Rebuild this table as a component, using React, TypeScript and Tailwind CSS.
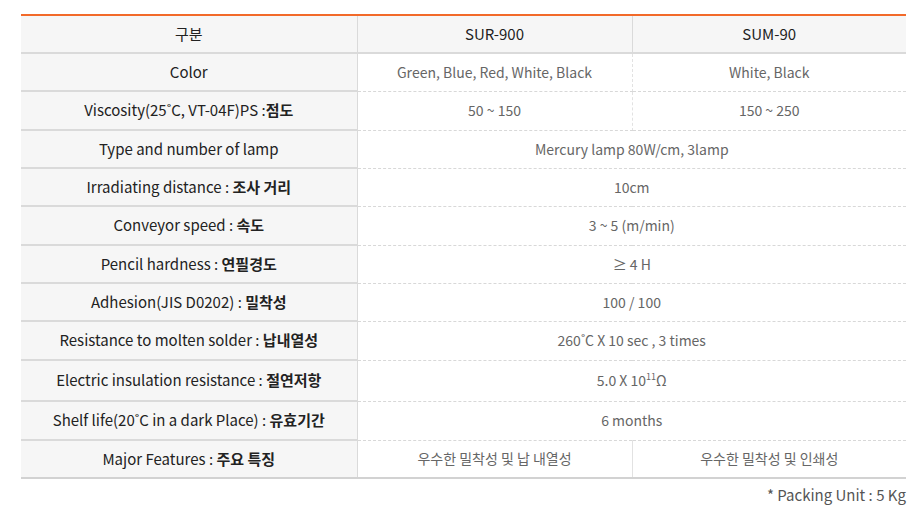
const rows: { label: string; ko?: string; a: React.ReactNode; b?: React.ReactNode; h: string }[] = [
  { label: 'Color', a: 'Green, Blue, Red, White, Black', b: 'White, Black', h: 'h-[38px]' },
  { label: 'Viscosity(25˚C, VT-04F)PS :', ko: '점도', a: '50 ~ 150', b: '150 ~ 250', h: 'h-[39px]' },
  { label: 'Type and number of lamp', a: 'Mercury lamp 80W/cm, 3lamp', h: 'h-[38px]' },
  { label: 'Irradiating distance : ', ko: '조사 거리', a: '10cm', h: 'h-[38px]' },
  { label: 'Conveyor speed : ', ko: '속도', a: '3 ~ 5 (m/min)', h: 'h-[39px]' },
  { label: 'Pencil hardness : ', ko: '연필경도', a: '≥ 4 H', h: 'h-[38px]' },
  { label: 'Adhesion(JIS D0202) : ', ko: '밀착성', a: '100 / 100', h: 'h-[38px]' },
  { label: 'Resistance to molten solder : ', ko: '납내열성', a: '260˚C X 10 sec , 3 times', h: 'h-[39px]' },
  {
    label: 'Electric insulation resistance : ',
    ko: '절연저항',
    a: (
      <span>
        5.0 X 10<sup className="text-[9px] relative top-[-6px] align-baseline">11</sup>Ω
      </span>
    ),
    h: 'h-[41px]',
  },
  { label: 'Shelf life(20˚C in a dark Place) : ', ko: '유효기간', a: '6 months', h: 'h-[39px]' },
  { label: 'Major Features : ', ko: '주요 특징', a: '우수한 밀착성 및 납 내열성', b: '우수한 밀착성 및 인쇄성', h: 'h-[38px]' },
]

export default function App() {
  return (
    <div
      className="w-[920px] h-[511px] bg-white pt-[14px] pl-[21px] pr-[14px]"
      style={{ fontFamily: '"Noto Sans CJK KR", "Noto Sans", sans-serif' }}
    >
      <table className="w-[885px] border-collapse table-fixed border-t-2 border-t-[#f26a2a] border-b-2 border-b-[#d2d2d2] text-[14px]">
        <colgroup>
          <col className="w-[336px]" />
          <col className="w-[275px]" />
          <col className="w-[274px]" />
        </colgroup>
        <thead>
          <tr className="h-[38px] bg-[#f6f6f6] border-b-2 border-b-[#dadada]">
            <th className="font-normal text-[15px] text-[#222] border-r border-r-[#dadada]">구분</th>
            <th className="font-normal text-[15px] text-[#222] border-r border-r-[#dadada]">SUR-900</th>
            <th className="font-normal text-[15px] text-[#222]">SUM-90</th>
          </tr>
        </thead>
        <tbody>
          {rows.map((r, i) => {
            const last = i === rows.length - 1
            return (
              <tr key={i} className={r.h}>
                <td
                  className={`bg-[#f6f6f6] text-center text-[15px] text-[#222] border-r border-r-[#dadada] ${last ? '' : 'border-b-2 border-b-[#dadada]'}`}
                >
                  {r.label}
                  {r.ko && <span className="font-bold">{r.ko}</span>}
                </td>
                {r.b !== undefined ? (
                  <>
                    <td className={`text-center text-[#666] border-r border-r-[#e2e2e2] ${last ? '' : 'border-b border-dashed border-b-[#d8d8d8]'}`}>
                      {r.a}
                    </td>
                    <td className={`text-center text-[#666] ${last ? '' : 'border-b border-dashed border-b-[#d8d8d8]'}`}>{r.b}</td>
                  </>
                ) : (
                  <td colSpan={2} className="text-center text-[#666] border-b border-dashed border-b-[#d8d8d8]">
                    {r.a}
                  </td>
                )}
              </tr>
            )
          })}
        </tbody>
      </table>
      <div className="w-[885px] text-right text-[15px] text-[#555] mt-[5px]">* Packing Unit : 5 Kg</div>
    </div>
  )
}
